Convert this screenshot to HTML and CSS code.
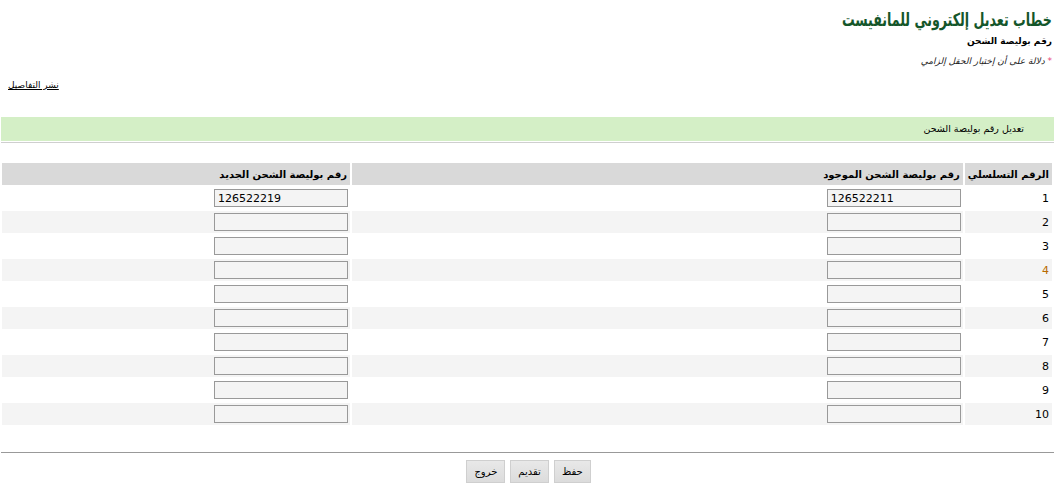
FILE: index.html
```html
<!DOCTYPE html>
<html lang="ar" dir="rtl">
<head>
<meta charset="utf-8">
<title>خطاب تعديل إلكتروني للمانفيست</title>
<link rel="stylesheet" href="styles.css">
</head>
<body>
<div class="page">
  <div class="head">
    <h1 class="title"><span class="title-text">خطاب تعديل إلكتروني للمانفيست</span></h1>
    <div class="subtitle">رقم بوليصة الشحن</div>
    <div class="note"><span class="star">*</span> دلالة على أن إختيار الحقل إلزامي</div>
  </div>
  <div class="linkrow"><a href="#" class="link">نشر التفاصيل</a></div>
  <div class="bar">تعديل رقم بوليصة الشحن</div>
  <table class="grid">
    <thead>
      <tr>
        <th class="c1">الرقم التسلسلي</th>
        <th class="c2">رقم بوليصة الشحن الموجود</th>
        <th class="c3">رقم بوليصة الشحن الجديد</th>
      </tr>
    </thead>
    <tbody>
      <tr><td class="c1">1</td><td class="c2"><input class="box" value="126522211"></td><td class="c3"><input class="box" value="126522219"></td></tr>
      <tr class="alt"><td class="c1">2</td><td class="c2"><input class="box"></td><td class="c3"><input class="box"></td></tr>
      <tr><td class="c1">3</td><td class="c2"><input class="box"></td><td class="c3"><input class="box"></td></tr>
      <tr class="alt"><td class="c1 hl">4</td><td class="c2"><input class="box"></td><td class="c3"><input class="box"></td></tr>
      <tr><td class="c1">5</td><td class="c2"><input class="box"></td><td class="c3"><input class="box"></td></tr>
      <tr class="alt"><td class="c1">6</td><td class="c2"><input class="box"></td><td class="c3"><input class="box"></td></tr>
      <tr><td class="c1">7</td><td class="c2"><input class="box"></td><td class="c3"><input class="box"></td></tr>
      <tr class="alt"><td class="c1">8</td><td class="c2"><input class="box"></td><td class="c3"><input class="box"></td></tr>
      <tr><td class="c1">9</td><td class="c2"><input class="box"></td><td class="c3"><input class="box"></td></tr>
      <tr class="alt"><td class="c1">10</td><td class="c2"><input class="box"></td><td class="c3"><input class="box"></td></tr>
    </tbody>
  </table>
  <div class="rule"></div>
  <div class="actions">
    <button class="btn">حفظ</button>
    <button class="btn">تقديم</button>
    <button class="btn">خروج</button>
  </div>
</div>
</body>
</html>
```
FILE: styles.css
```css
html, body {
  margin: 0;
  padding: 0;
  background: #fff;
}
body {
  font-family: "DejaVu Sans", Tahoma, sans-serif;
  font-size: 11px;
  color: #000;
}
.page {
  width: 1054px;
}
.head {
  padding: 8px 2px 0 0;
}
.title {
  margin: 0;
  font-size: 18px;
  font-weight: bold;
  color: #14562a;
  line-height: 24px;
}
.title-text {
  display: inline-block;
  transform: scaleX(0.7);
  transform-origin: right center;
}
.subtitle {
  font-size: 9px;
  font-weight: bold;
  line-height: 14px;
  margin-top: 2px;
}
.note {
  font-size: 9px;
  font-style: italic;
  line-height: 14px;
  margin-top: 6px;
  color: #222;
}
.star {
  color: #e8457a;
  font-style: normal;
}
.linkrow {
  text-align: left;
  padding-left: 8px;
  margin-top: 10px;
  line-height: 14px;
}
.link {
  color: #000;
  font-size: 9px;
  text-decoration: underline;
}
.bar {
  margin-top: 25px;
  margin-left: 1px;
  height: 24px;
  line-height: 24px;
  background: #d4efc6;
  border-bottom: 2px solid #fff;
  padding-right: 30px;
  font-size: 9.5px;
  position: relative;
}
.bar::after {
  content: "";
  position: absolute;
  left: 0;
  right: 0;
  bottom: -2px;
  height: 1px;
  background: #cfcfcf;
}
.grid {
  width: 100%;
  border-collapse: separate;
  border-spacing: 2px;
  margin-top: 18px;
}
.grid th {
  background: #d9d9d9;
  height: 22px;
  padding: 0 3px;
  text-align: right;
  font-size: 10px;
  font-weight: bold;
  white-space: nowrap;
}
.grid td {
  height: 22px;
  padding: 0 2px;
  text-align: right;
}
.grid tr.alt td {
  background: #f4f4f4;
}
.grid .c1 {
  width: 81px;
  padding-right: 3px;
}
.hl {
  color: #b86a00;
}
.c3 {
  width: 342px;
}
.box {
  width: 134px;
  height: 18px;
  box-sizing: border-box;
  border: 1px solid #999;
  background: #f4f4f4;
  font-family: "DejaVu Sans", Tahoma, sans-serif;
  font-size: 11px;
  padding: 0 3px;
  direction: ltr;
  text-align: left;
  margin: 0;
  vertical-align: middle;
}
.rule {
  margin-top: 25px;
  margin-left: 1px;
  height: 1px;
  background: #999;
}
.actions {
  display: flex;
  justify-content: center;
  gap: 5px;
  margin-top: 7px;
  padding-left: 3px;
}
.btn {
  font-family: "DejaVu Sans", Tahoma, sans-serif;
  font-size: 10px;
  height: 23px;
  padding: 0 7px;
  background: linear-gradient(#e8e8e8, #dcdcdc);
  border: 1px solid #cfcfcf;
  color: #000;
}
```
